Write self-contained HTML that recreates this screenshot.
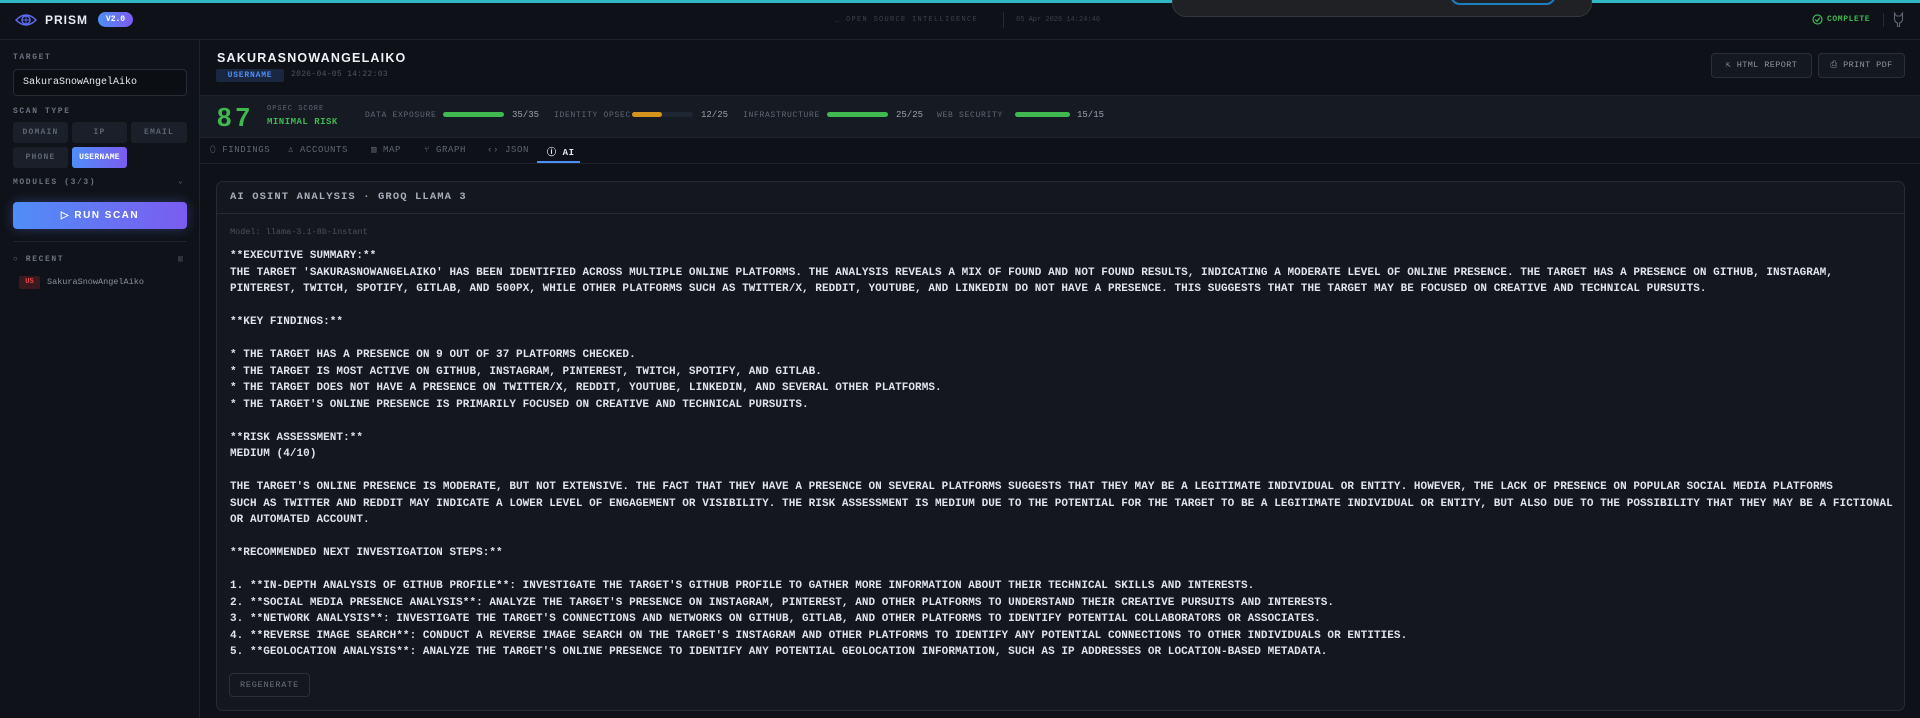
<!DOCTYPE html>
<html><head><meta charset="utf-8"><style>
*{box-sizing:border-box;margin:0;padding:0}
body{width:1920px;height:718px;overflow:hidden;background:#0e1117;font-family:"Liberation Mono",monospace;color:#c9d1d9;position:relative}
.abs{position:absolute}
.topbar{left:0;top:0;width:1920px;height:3px;background:#2fb8c4}
.hdr{left:0;top:3px;width:1920px;height:37px;border-bottom:1px solid #1e232c;background:#0e1117}
.lbl{font-size:8px;letter-spacing:1.6px;color:#6b7380;font-weight:bold}
.side{left:0;top:40px;width:200px;height:678px;border-right:1px solid #1e232c;background:#0f1218}
.btn{position:absolute;height:21px;background:#1a1f29;border-radius:3px;color:#5d6573;font-size:8px;font-weight:bold;letter-spacing:1.2px;text-align:center;line-height:21px}
.body{font-size:11px;font-weight:bold;color:#dfe3ea;line-height:16.5px;white-space:nowrap;letter-spacing:.05px}
.tab{position:absolute;top:145px;font-size:9px;letter-spacing:.6px;color:#5f6774}
.bl{font-size:8px;letter-spacing:.7px;color:#5f6774;position:absolute;top:111px}
.bar{position:absolute;top:112px;width:61px;height:5px;border-radius:3px;background:#1f2633}
.bv{position:absolute;top:110px;font-size:9px;color:#9aa3b0}
</style></head><body>
<div class="abs topbar"></div>
<div class="abs hdr"></div>
<svg class="abs" style="left:15px;top:10px" width="22" height="20" viewBox="0 0 24 22"><path d="M1 11 Q12 0 23 11 Q12 22 1 11Z" fill="none" stroke="#5b6cf0" stroke-width="1.6"/><circle cx="12" cy="11" r="4.5" fill="none" stroke="#5b6cf0" stroke-width="1.5"/><path d="M12 6.5v9M7.5 11h9" stroke="#5b6cf0" stroke-width="1"/></svg>
<div class="abs" style="left:45px;top:13px;font-family:'Liberation Sans',sans-serif;font-weight:bold;font-size:12px;letter-spacing:1px;color:#e8ecf2">PRISM</div>
<div class="abs" style="left:98px;top:12px;width:35px;height:15px;border-radius:8px;background:linear-gradient(90deg,#4f8ef7,#7b5cf0);color:#fff;font-size:8px;font-weight:bold;text-align:center;line-height:15px">V2.0</div>
<div class="abs" style="left:835px;top:16px;font-size:7px;letter-spacing:1.3px;color:#3a414c">_ OPEN SOURCE INTELLIGENCE</div>
<div class="abs" style="left:1003px;top:12px;width:1px;height:16px;background:#252b35"></div>
<div class="abs" style="left:1016px;top:16px;font-size:7px;color:#3a414c">05 Apr 2026 14:24:46</div>
<div class="abs" style="left:1172px;top:-10px;width:420px;height:27px;background:#202124;border:1px solid #33363b;border-radius:0 0 14px 14px"></div>
<div class="abs" style="left:1450px;top:-10px;width:106px;height:15px;border:2px solid #1a7fc0;border-radius:0 0 10px 10px"></div>
<svg class="abs" style="left:1812px;top:14px" width="11" height="11"><circle cx="5.5" cy="5.5" r="4.5" fill="none" stroke="#3fb950" stroke-width="1.2"/><path d="M3.2 5.5l1.8 1.8 2.8-3.6" stroke="#3fb950" fill="none" stroke-width="1.2"/></svg>
<div class="abs" style="left:1827px;top:15px;font-size:8px;font-weight:bold;letter-spacing:.6px;color:#3fb950">COMPLETE</div>
<div class="abs" style="left:1883px;top:13px;width:1px;height:14px;background:#252b35"></div>
<svg class="abs" style="left:1893px;top:12px" width="11" height="15"><path d="M1.5 1l2 3h4l2-3v6q0 3-3 4v4h-2v-4q-3-1-3-4z" fill="none" stroke="#5f6774" stroke-width="1.1"/></svg>

<div class="abs side"></div>
<div class="abs lbl" style="left:13px;top:53px">TARGET</div>
<div class="abs" style="left:13px;top:69px;width:174px;height:27px;border:1px solid #262c36;border-radius:4px;background:#0b0e13;color:#e6e9ee;font-size:10px;line-height:25px;padding-left:9px">SakuraSnowAngelAiko</div>
<div class="abs lbl" style="left:13px;top:107px">SCAN TYPE</div>
<div class="btn" style="left:13px;top:122px;width:55px">DOMAIN</div>
<div class="btn" style="left:72px;top:122px;width:55px">IP</div>
<div class="btn" style="left:131px;top:122px;width:56px">EMAIL</div>
<div class="btn" style="left:13px;top:147px;width:55px">PHONE</div>
<div class="btn" style="left:72px;top:147px;width:55px;background:linear-gradient(90deg,#4f8ef7,#7b5cf0);color:#fff;letter-spacing:.3px">USERNAME</div>
<div class="abs lbl" style="left:13px;top:178px">MODULES (3/3)</div>
<div class="abs" style="left:178px;top:176px;font-size:8px;color:#5f6774">⌄</div>
<div class="abs" style="left:13px;top:202px;width:174px;height:27px;border-radius:4px;background:linear-gradient(90deg,#4f8ef7,#7b5cf0);box-shadow:0 0 12px rgba(100,120,240,.35);color:#fff;font-family:'Liberation Sans',sans-serif;font-weight:bold;font-size:10px;letter-spacing:1.5px;text-align:center;line-height:27px">▷ RUN SCAN</div>
<div class="abs" style="left:13px;top:241px;width:174px;height:1px;background:#1e232c"></div>
<div class="abs lbl" style="left:13px;top:255px">○ RECENT</div>
<div class="abs" style="left:178px;top:254px;font-size:8px;color:#4a515c">▥</div>
<div class="abs" style="left:19px;top:276px;width:21px;height:13px;background:#3a1a1e;border-radius:2px;color:#e5484d;font-size:7px;font-weight:bold;text-align:center;line-height:13px">US</div>
<div class="abs" style="left:47px;top:277px;font-size:8.5px;color:#8a929e">SakuraSnowAngelAiko</div>

<div class="abs" style="left:217px;top:51px;font-family:'Liberation Sans',sans-serif;font-weight:bold;font-size:12.5px;letter-spacing:1.2px;color:#eef1f5">SAKURASNOWANGELAIKO</div>
<div class="abs" style="left:216px;top:69px;width:68px;height:13px;background:#1a2740;border-radius:2px;color:#4f8ef7;font-size:8px;font-weight:bold;letter-spacing:.8px;text-align:center;line-height:13px">USERNAME</div>
<div class="abs" style="left:291px;top:70px;font-size:8px;letter-spacing:.3px;color:#4e5562">2026-04-05 14:22:03</div>
<div class="abs" style="left:1711px;top:53px;width:101px;height:25px;border:1px solid #2a303a;border-radius:4px;background:#141820;color:#8d95a1;font-size:8.5px;text-align:center;line-height:23px;letter-spacing:.4px">⇱ HTML REPORT</div>
<div class="abs" style="left:1818px;top:53px;width:87px;height:25px;border:1px solid #2a303a;border-radius:4px;background:#141820;color:#8d95a1;font-size:8.5px;text-align:center;line-height:23px;letter-spacing:.4px">⎙ PRINT PDF</div>

<div class="abs" style="left:200px;top:95px;width:1720px;height:43px;background:#161a22;border-top:1px solid #1e232c;border-bottom:1px solid #1e232c"></div>
<div class="abs" style="left:217px;top:102px;font-family:'Liberation Sans',sans-serif;font-weight:bold;font-size:26px;letter-spacing:4px;color:#3fb950">87</div>
<div class="abs" style="left:267px;top:105px;font-size:7px;letter-spacing:1px;color:#5f6774">OPSEC SCORE</div>
<div class="abs" style="left:267px;top:117px;font-size:9px;font-weight:bold;letter-spacing:.5px;color:#3fb950">MINIMAL RISK</div>
<div class="bl" style="left:365px">DATA EXPOSURE</div><div class="bar" style="left:443px;background:#3fb950"></div><div class="bv" style="left:512px">35/35</div>
<div class="bl" style="left:554px">IDENTITY OPSEC</div><div class="bar" style="left:632px"><div style="width:30px;height:5px;border-radius:3px;background:#d4941e"></div></div><div class="bv" style="left:701px">12/25</div>
<div class="bl" style="left:743px">INFRASTRUCTURE</div><div class="bar" style="left:827px;background:#3fb950"></div><div class="bv" style="left:896px">25/25</div>
<div class="bl" style="left:937px">WEB SECURITY</div><div class="bar" style="left:1015px;width:55px;background:#3fb950"></div><div class="bv" style="left:1077px">15/15</div>

<div class="abs" style="left:200px;top:163px;width:1720px;height:1px;background:#1e232c"></div>
<div class="tab" style="left:210px">⬯ FINDINGS</div>
<div class="tab" style="left:288px">♙ ACCOUNTS</div>
<div class="tab" style="left:371px">▥ MAP</div>
<div class="tab" style="left:424px">⑂ GRAPH</div>
<div class="tab" style="left:487px">‹› JSON</div>
<div class="tab" style="left:547px;color:#e6e9ee;font-weight:bold">ⓘ AI</div>
<div class="abs" style="left:537px;top:161px;width:43px;height:2px;background:#4f8ef7"></div>

<div class="abs" style="left:216px;top:181px;width:1689px;height:530px;border:1px solid #262b34;border-radius:7px;background:#14171e"></div>
<div class="abs" style="left:216px;top:213px;width:1689px;height:1px;background:#262b34"></div>
<div class="abs" style="left:230px;top:191px;font-size:10.5px;font-weight:bold;letter-spacing:1.1px;color:#a5adb9">AI OSINT ANALYSIS · GROQ LLAMA 3</div>
<div class="abs" style="left:230px;top:227px;font-size:8.5px;color:#4a515c">Model: llama-3.1-8b-instant</div>
<div class="abs body" style="left:230px;top:248px">**EXECUTIVE SUMMARY:**<br>THE TARGET 'SAKURASNOWANGELAIKO' HAS BEEN IDENTIFIED ACROSS MULTIPLE ONLINE PLATFORMS. THE ANALYSIS REVEALS A MIX OF FOUND AND NOT FOUND RESULTS, INDICATING A MODERATE LEVEL OF ONLINE PRESENCE. THE TARGET HAS A PRESENCE ON GITHUB, INSTAGRAM,<br>PINTEREST, TWITCH, SPOTIFY, GITLAB, AND 500PX, WHILE OTHER PLATFORMS SUCH AS TWITTER/X, REDDIT, YOUTUBE, AND LINKEDIN DO NOT HAVE A PRESENCE. THIS SUGGESTS THAT THE TARGET MAY BE FOCUSED ON CREATIVE AND TECHNICAL PURSUITS.<br><br>**KEY FINDINGS:**<br><br>* THE TARGET HAS A PRESENCE ON 9 OUT OF 37 PLATFORMS CHECKED.<br>* THE TARGET IS MOST ACTIVE ON GITHUB, INSTAGRAM, PINTEREST, TWITCH, SPOTIFY, AND GITLAB.<br>* THE TARGET DOES NOT HAVE A PRESENCE ON TWITTER/X, REDDIT, YOUTUBE, LINKEDIN, AND SEVERAL OTHER PLATFORMS.<br>* THE TARGET'S ONLINE PRESENCE IS PRIMARILY FOCUSED ON CREATIVE AND TECHNICAL PURSUITS.<br><br>**RISK ASSESSMENT:**<br>MEDIUM (4/10)<br><br>THE TARGET'S ONLINE PRESENCE IS MODERATE, BUT NOT EXTENSIVE. THE FACT THAT THEY HAVE A PRESENCE ON SEVERAL PLATFORMS SUGGESTS THAT THEY MAY BE A LEGITIMATE INDIVIDUAL OR ENTITY. HOWEVER, THE LACK OF PRESENCE ON POPULAR SOCIAL MEDIA PLATFORMS<br>SUCH AS TWITTER AND REDDIT MAY INDICATE A LOWER LEVEL OF ENGAGEMENT OR VISIBILITY. THE RISK ASSESSMENT IS MEDIUM DUE TO THE POTENTIAL FOR THE TARGET TO BE A LEGITIMATE INDIVIDUAL OR ENTITY, BUT ALSO DUE TO THE POSSIBILITY THAT THEY MAY BE A FICTIONAL<br>OR AUTOMATED ACCOUNT.<br><br>**RECOMMENDED NEXT INVESTIGATION STEPS:**<br><br>1. **IN-DEPTH ANALYSIS OF GITHUB PROFILE**: INVESTIGATE THE TARGET'S GITHUB PROFILE TO GATHER MORE INFORMATION ABOUT THEIR TECHNICAL SKILLS AND INTERESTS.<br>2. **SOCIAL MEDIA PRESENCE ANALYSIS**: ANALYZE THE TARGET'S PRESENCE ON INSTAGRAM, PINTEREST, AND OTHER PLATFORMS TO UNDERSTAND THEIR CREATIVE PURSUITS AND INTERESTS.<br>3. **NETWORK ANALYSIS**: INVESTIGATE THE TARGET'S CONNECTIONS AND NETWORKS ON GITHUB, GITLAB, AND OTHER PLATFORMS TO IDENTIFY POTENTIAL COLLABORATORS OR ASSOCIATES.<br>4. **REVERSE IMAGE SEARCH**: CONDUCT A REVERSE IMAGE SEARCH ON THE TARGET'S INSTAGRAM AND OTHER PLATFORMS TO IDENTIFY ANY POTENTIAL CONNECTIONS TO OTHER INDIVIDUALS OR ENTITIES.<br>5. **GEOLOCATION ANALYSIS**: ANALYZE THE TARGET'S ONLINE PRESENCE TO IDENTIFY ANY POTENTIAL GEOLOCATION INFORMATION, SUCH AS IP ADDRESSES OR LOCATION-BASED METADATA.</div>
<div class="abs" style="left:229px;top:673px;width:81px;height:24px;border:1px solid #2a303a;border-radius:4px;color:#6b7380;font-size:8.5px;letter-spacing:.8px;text-align:center;line-height:22px">REGENERATE</div>
</body></html>
